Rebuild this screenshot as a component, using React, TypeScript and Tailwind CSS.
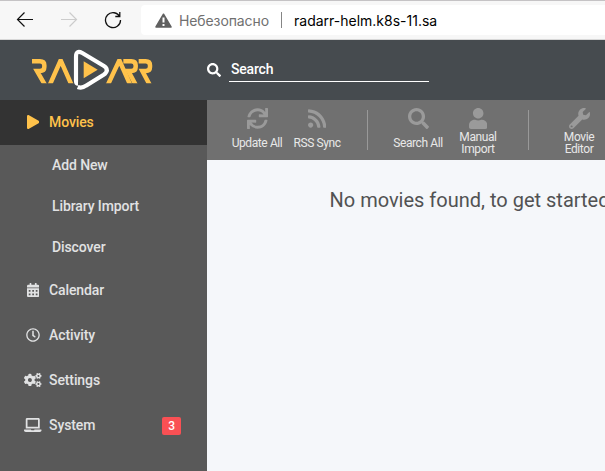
import type { ReactNode } from 'react';
import {
  FaCalendarAlt, FaCogs, FaLaptop, FaPlay, FaRegClock, FaRss, FaSearch, FaSync, FaUser, FaWrench,
} from 'react-icons/fa';

function Logo() {
  return (
    <svg className="h-[44px] w-[124px]" viewBox="90 144 372 132" fill="none">
      <clipPath id="letters"><path d="M90 177H462V250H90Z" /></clipPath>
      <g stroke="#ffc24b" strokeWidth="13.5" clipPath="url(#letters)">
        <path d="M96 184H120Q133 184 133 196V201Q133 213 120 213H111L138 260" />
        <path d="M147 260L182 181L217 260" />
        <path d="M321 260L358 181L393 260" />
        <path d="M370 184H394Q407 184 407 196V201Q407 213 394 213H385L410 260" />
        <path d="M416 184H437Q450 184 450 196V201Q450 213 437 213H427L452 260" />
      </g>
      <path d="M234 251Q228 251 228 242V170Q228 149 247 159L312 198Q322 204 320 212" stroke="#fff" strokeWidth="12.5" />
      <path d="M321 209Q320 218 311 224L258 257Q246 266 233 261" stroke="#fff" strokeWidth="12.5" />
      <path d="M251 184L293 209L251 235Z" fill="#ffc24b" />
    </svg>
  );
}

function BrowserBar() {
  return (
    <div className="flex h-10 shrink-0 items-center border-t border-b border-t-[#c5c3c5] border-b-[#d8d8d8] bg-[#f7f7f7] font-['Inter',sans-serif] text-[14px]">
      <svg className="ml-4 h-4 w-[17px] shrink-0" viewBox="0 0 17 16" fill="none" stroke="#111" strokeWidth="1.2">
        <path d="M17 7.5H1.5M8.5 .5L1.5 7.5L8.5 14.5" />
      </svg>
      <svg className="ml-7 h-4 w-[17px] shrink-0" viewBox="0 0 17 16" fill="none" stroke="#ccc" strokeWidth="1.2">
        <path d="M0 7.5H15.5M8.5 .5L15.5 7.5L8.5 14.5" />
      </svg>
      <svg className="ml-[26px] h-[18px] w-[18px] shrink-0" viewBox="0 0 18 18" fill="none" stroke="#111" strokeWidth="1.3">
        <path d="M15.8 6A7.5 7.5 0 1 0 16.5 9M15.8 1V5.5H11.3" />
      </svg>
      <div className="ml-[19px] flex h-[30px] grow items-center overflow-hidden rounded-l-[4px] bg-white">
        <svg className="ml-[14px] h-[15px] w-[17px] shrink-0" viewBox="0 0 17 15">
          <path d="M8.5 1.2L16 14H1Z" fill="#606060" stroke="#606060" strokeWidth="1.5" strokeLinejoin="round" />
          <path d="M7.5 4.5H9.5V9.5H7.5ZM7.5 11H9.5V13H7.5Z" fill="#fff" />
        </svg>
        <span className="ml-[7px] w-[90px] shrink-0 whitespace-nowrap tracking-[-0.1px] text-[#707070]">Небезопасно</span>
        <span className="ml-[12px] h-4 w-px shrink-0 bg-[#858585]" />
        <span className="ml-3 whitespace-nowrap text-black">radarr-helm.k8s-11.sa</span>
      </div>
    </div>
  );
}

function MenuItem({ icon, label, active, badge }: { icon: ReactNode; label: string; active?: boolean; badge?: string }) {
  return (
    <div className={`flex h-[45px] items-center pl-6 pr-[26px] ${active ? 'bg-[#333] text-[#ffc24b]' : ''}`}>
      <span className="mb-px mr-[7px] flex w-[18px] shrink-0 justify-center">{icon}</span>
      <span>{label}</span>
      {badge && (
        <span className="ml-auto mt-px flex h-[18px] w-[19px] items-center justify-center rounded-[2px] bg-[#f95054] text-[12px] text-white">{badge}</span>
      )}
    </div>
  );
}

function ToolButton({ icon, label, wrap }: { icon: ReactNode; label: string; wrap?: boolean }) {
  return (
    <div className="flex w-[60px] shrink-0 flex-col items-center pt-2 text-center">
      <span className="text-[21px] text-[#9a9a9a]">{icon}</span>
      <span className="mt-[2px] flex h-6 w-full items-center justify-center px-1 text-[12px] leading-[12px] tracking-[-0.4px] text-[#e8e8e8]">
        <span className={wrap ? '' : 'whitespace-nowrap'}>{label}</span>
      </span>
    </div>
  );
}

const subItems = ['Add New', 'Library Import', 'Discover'];

export default function App() {
  return (
    <div className="flex h-[471px] w-[605px] flex-col overflow-hidden bg-[#f5f7fa] font-['Roboto',sans-serif] text-[14px] text-[#e1e2e3]">
      <BrowserBar />
      <header className="flex h-[60px] shrink-0 items-center bg-[#464b4f]">
        <div className="flex w-[207px] pl-[30px]"><Logo /></div>
        <FaSearch className="text-[14px] text-white" />
        <div className="ml-2 h-[24px] w-[200px] border-b border-white pl-[2px] text-[14px] font-medium leading-[23px] tracking-[-0.2px] text-white">Search</div>
      </header>
      <div className="flex min-h-0 grow">
        <nav className="w-[207px] shrink-0 bg-[#595959] font-medium tracking-[-0.1px]">
          <MenuItem active icon={<FaPlay className="h-[14px] w-[12.25px] shrink-0" />} label="Movies" />
          {subItems.map((s) => <div key={s} className="flex h-[41px] items-center pl-[52px]">{s}</div>)}
          <MenuItem icon={<FaCalendarAlt className="h-[14px] w-[12.25px] shrink-0" />} label="Calendar" />
          <MenuItem icon={<FaRegClock className="h-[14px] w-[14px] shrink-0" />} label="Activity" />
          <MenuItem icon={<FaCogs className="h-[14px] w-[17.5px] shrink-0" />} label="Settings" />
          <MenuItem icon={<FaLaptop className="h-[14px] w-[17.5px] shrink-0" />} label="System" badge="3" />
        </nav>
        <main className="min-w-0 grow overflow-hidden">
          <div className="flex h-[60px] items-start bg-[#707070] pl-5">
            <ToolButton icon={<FaSync />} label="Update All" />
            <ToolButton icon={<FaRss className="h-[21px] w-[18.4px]" />} label="RSS Sync" />
            <span className="ml-5 mr-5 mt-[10px] h-10 w-px shrink-0 bg-[#999]" />
            <ToolButton icon={<FaSearch />} label="Search All" />
            <ToolButton icon={<FaUser className="h-[21px] w-[18.4px]" />} label="Manual Import" wrap />
            <span className="ml-5 mr-5 mt-[10px] h-10 w-px shrink-0 bg-[#999]" />
            <ToolButton icon={<FaWrench />} label="Movie Editor" wrap />
          </div>
          <div className="whitespace-nowrap pl-[122.5px] pt-[25px] text-[20px] leading-[30px] text-[#515253]">No movies found, to get started</div>
        </main>
      </div>
    </div>
  );
}
